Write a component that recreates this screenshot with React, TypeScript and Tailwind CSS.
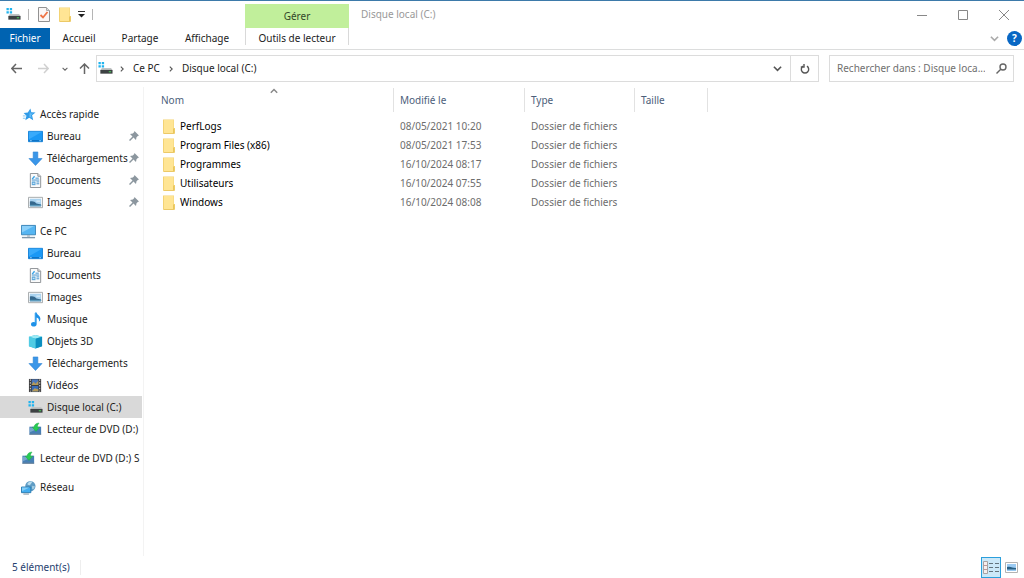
import type { ReactNode } from 'react';

type IconName =
  | 'star'
  | 'desktop'
  | 'download'
  | 'document'
  | 'picture'
  | 'pc'
  | 'music'
  | 'cube'
  | 'video'
  | 'drive'
  | 'dvd'
  | 'network';

interface NavEntry {
  label: string;
  icon: IconName;
  root?: boolean;
  pinned?: boolean;
  selected?: boolean;
}

const navGroups: NavEntry[][] = [
  [
    { label: 'Accès rapide', icon: 'star', root: true },
    { label: 'Bureau', icon: 'desktop', pinned: true },
    { label: 'Téléchargements', icon: 'download', pinned: true },
    { label: 'Documents', icon: 'document', pinned: true },
    { label: 'Images', icon: 'picture', pinned: true },
  ],
  [
    { label: 'Ce PC', icon: 'pc', root: true },
    { label: 'Bureau', icon: 'desktop' },
    { label: 'Documents', icon: 'document' },
    { label: 'Images', icon: 'picture' },
    { label: 'Musique', icon: 'music' },
    { label: 'Objets 3D', icon: 'cube' },
    { label: 'Téléchargements', icon: 'download' },
    { label: 'Vidéos', icon: 'video' },
    { label: 'Disque local (C:)', icon: 'drive', selected: true },
    { label: 'Lecteur de DVD (D:)', icon: 'dvd' },
  ],
  [{ label: 'Lecteur de DVD (D:) S', icon: 'dvd', root: true }],
  [{ label: 'Réseau', icon: 'network', root: true }],
];

const files = [
  { name: 'PerfLogs', modified: '08/05/2021 10:20' },
  { name: 'Program Files (x86)', modified: '08/05/2021 17:53' },
  { name: 'Programmes', modified: '16/10/2024 08:17' },
  { name: 'Utilisateurs', modified: '16/10/2024 07:55' },
  { name: 'Windows', modified: '16/10/2024 08:08' },
];

const drawings: Record<IconName, ReactNode> = {
  star: (
    <>
      <path d="M10 1.5l1 4 4.500.3-3.700 3 1.200 5.200-4.200-2.600L4.600 14l1.200-4.700-3-3 4.500-.5z" fill="#2f9be8" />
      <path d="M9.500 4l.8 2.800 3 .2-2.700 1.800.7 3-2.500-1.600z" fill="#62bdf7" />
      <path d="M2 9.500h3M2 12h3" stroke="#7cc4f2" />
    </>
  ),
  desktop: (
    <>
      <path d="M.5 2.500h15v11H.5z" fill="#1a98f5" stroke="#1380d6" />
      <path d="M1 3h14L1 11z" fill="#38aafb" />
      <path d="M1 12.500h14" stroke="#0b66b5" />
      <path d="M2 12.500h2M12 12.500h2" stroke="#9ad4ff" />
    </>
  ),
  download: <path d="M5.500 1h5v7h4.500L8 15.500 1 8h4.500z" fill="#3a96e8" stroke="#2c82d2" strokeWidth=".6" />,
  document: (
    <>
      <path d="M2.500.5h8l3 3v12h-11z" fill="#fbfbfb" stroke="#8b8f93" />
      <path d="M10.500.5v3h3" fill="#ddd" stroke="#8b8f93" />
      <path d="M8 5.500h3.500M4 7.500h8M9 9.500h3M9 11.500h3" stroke="#3b8dcb" />
      <path d="M4.500 6.500L7 3.500" stroke="#35a2e8" strokeWidth="1.500" />
      <path d="M4 9h4v4H4z" fill="#5fa9dc" />
      <path d="M5 11h2" stroke="#e3f2fb" />
    </>
  ),
  picture: (
    <>
      <path d="M.5 2.500h15v11H.5z" fill="#fafafa" stroke="#a3a7aa" />
      <path d="M2 4h12v8H2z" fill="#a9d3f0" />
      <path d="M2 7c3-1 5 0 7 2l5 1v2H2z" fill="#35688d" />
      <path d="M2 10.500h12V12H2z" fill="#5c9bbd" />
      <path d="M9 6h4v1H9z" fill="#eef7fc" />
    </>
  ),
  pc: (
    <>
      <path d="M.5 1.500h15v10H.5z" fill="#55b5f2" stroke="#3a84b7" />
      <path d="M1 2h13L1 9z" fill="#8bd0fa" />
      <path d="M6.500 12h3v1.500h-3z" fill="#a7b4bd" />
      <path d="M1 14.500h14" stroke="#7f97aa" strokeWidth="1.500" />
    </>
  ),
  music: (
    <>
      <path d="M7.500.5h1.700c.2 2.500 4.300 3.500 4 7-.1 1.500-.9 2.500-1.700 3 .8-2.500-.4-4-2.300-4.600V13c0 3.300-6 3.300-6 .2 0-2.300 2.500-3 4.300-2.200z" fill="#1e91e8" />
      <path d="M7.500 1v10.500" stroke="#58b5f5" strokeWidth=".8" />
    </>
  ),
  cube: (
    <>
      <path d="M1 3l7-2 7 2v10l-7 2.500L1 13z" fill="#2bb3d6" />
      <path d="M1 3l7-2 7 2-7 2z" fill="#9ceaf5" />
      <path d="M8 5l7-2v10l-7 2.500z" fill="#0c8fc0" />
      <path d="M1 3l7 2v10.500L1 13z" fill="#50cce4" />
    </>
  ),
  video: (
    <>
      <path d="M1 1h13v14H1z" fill="#3c3c3e" />
      <path d="M4 1.500h7v6H4z" fill="#4b78bd" />
      <path d="M4 8.500h7v6H4z" fill="#386bb8" />
      <path d="M4 7l2-3 2 2 3-3v4.500H4zM4 14l3-3 4 1v2.500H4z" fill="#b49a59" />
      <path d="M2.500 1.500v13M12.500 1.500v13" stroke="#e3e3e3" strokeDasharray="1.500 1.500" />
    </>
  ),
  drive: (
    <>
      <path d="M.5 1H3v2.500H.5zM4 1h2.500v2.500H4zM.5 4.500H3V7H.5zM4 4.500h2.500V7H4z" fill="#20b4ef" />
      <path d="M4 7.500h10L15.500 10h-13z" fill="#c1c4c5" />
      <path d="M2.500 9.500h13v4h-13z" fill="#3d4143" />
      <path d="M11.500 11.500H14" stroke="#4fe05f" />
    </>
  ),
  dvd: (
    <>
      <path d="M1.500 5h12.500v8.500H1.500z" fill="#477fb5" />
      <path d="M2 6h11L2 11z" fill="#77a6cc" />
      <path d="M1.500 13h12.500" stroke="#6d7f91" />
      <path d="M11.500 1C8 1.500 6.500 3.500 6.500 5.500H4.500L8.500 10l4-4.500H10c0-1.500.3-2.500 1.500-4z" fill="#28cc52" stroke="#1da944" strokeWidth=".5" />
    </>
  ),
  network: (
    <>
      <circle cx="10" cy="6.500" r="5.500" fill="#5f9cc4" />
      <path d="M7 3.500c2-2 4-2 5-1.500L9.500 5.500 7 5z" fill="#b9dced" />
      <path d="M12 6l3 1-2 3-1.500-1z" fill="#a3cde3" />
      <path d="M.5 7.500h10v6H.5z" fill="#42adf0" stroke="#287aaf" />
      <path d="M1 8h8l-8 4z" fill="#83cef8" />
      <path d="M2.500 15h6" stroke="#788e9e" />
    </>
  ),
};

function Icon({ name }: { name: IconName }) {
  return (
    <svg className="w-[15px] h-[15px] shrink-0" viewBox="0 0 16 16" aria-hidden="true">
      {drawings[name]}
    </svg>
  );
}

function FolderIcon() {
  return (
    <svg className="w-3 h-[15px] shrink-0" viewBox="0 0 12 15" aria-hidden="true">
      <path d="M0 .5h11V9h1v5.500H0z" fill="#f3d374" />
      <path d="M1 1h9.500v13H1z" fill="#ffe594" />
      <path d="M10 9.500h1.500V14H10z" fill="#e9c65c" />
      <path d="M.5 14.500h11" stroke="#ecc967" />
    </svg>
  );
}

function PinIcon() {
  return (
    <svg className="w-2.5 h-2.5 shrink-0" viewBox="0 0 10 10" aria-hidden="true">
      <path d="M5.500 0L10 4.500l-1.200.4L7.500 6.200 7 9 4.500 6.500 1 10 0 9l3.500-3.500L1 3l2.800-.5 1.300-1.300z" fill="#8c979f" />
    </svg>
  );
}

interface ChevronProps {
  direction: 'up' | 'down' | 'right';
  className: string;
}

function Chevron({ direction, className }: ChevronProps) {
  const paths = {
    up: 'M1 6l4-4 4 4',
    down: 'M1 3l4 4 4-4',
    right: 'M3 1l4 4-4 4',
  };
  return (
    <svg className={className} viewBox="0 0 10 10" fill="none" stroke="currentColor" aria-hidden="true">
      <path d={paths[direction]} strokeWidth="1.800" />
    </svg>
  );
}

function Separator() {
  return <span className="w-px h-[11px] bg-[#b5b5b5]" />;
}

function TitleBar() {
  return (
    <div className="flex h-[27px]">
      <div className="flex items-center w-[245px] shrink-0 pl-1.5">
        <Icon name="drive" />
        <div className="flex items-center gap-[9px] pl-[7px]">
          <Separator />
          <button aria-label="Propriétés">
            <svg className="w-3 h-[15px]" viewBox="0 0 12 15" aria-hidden="true">
              <path d="M.5.5h8l3 3v11H.5z" fill="#faf7f6" stroke="#929292" />
              <path d="M8.500.5v3h3" fill="#ddd" stroke="#aaa" />
              <path d="M2.500 8l2.500 2.500L9.500 5" fill="none" stroke="#ee7445" strokeWidth="1.800" />
            </svg>
          </button>
          <button aria-label="Nouveau dossier">
            <FolderIcon />
          </button>
        </div>
        <div className="flex items-center gap-[7px] pl-[7px]">
          <button aria-label="Personnaliser la barre d'outils Accès rapide">
            <svg className="w-[7px] h-[7px]" viewBox="0 0 7 7" aria-hidden="true">
              <path d="M0 .5h7" stroke="#333" />
              <path d="M0 3h7L3.500 6.500z" fill="#222" />
            </svg>
          </button>
          <Separator />
        </div>
      </div>
      <div className="flex items-center justify-center w-[104px] mt-[3px] shrink-0 bg-[#c1ef9b] text-[#33472a]">
        Gérer
      </div>
      <h1 className="flex-1 flex items-center pl-3 text-[#999]">Disque local (C:)</h1>
      <div className="flex text-[#888]">
        <button className="flex items-center justify-center w-[41px]" aria-label="Réduire">
          <svg className="w-[10px] h-[10px]" viewBox="0 0 10 10" stroke="currentColor">
            <path d="M0 5.500h10" />
          </svg>
        </button>
        <button className="flex items-center justify-center w-[41px]" aria-label="Agrandir">
          <svg className="w-[10px] h-[10px]" viewBox="0 0 10 10" fill="none" stroke="currentColor">
            <path d="M.5.5h9v9h-9z" />
          </svg>
        </button>
        <button className="flex items-center justify-center w-[41px]" aria-label="Fermer">
          <svg className="w-[10px] h-[10px]" viewBox="0 0 10 10" stroke="currentColor">
            <path d="M0 0l10 10M10 0L0 10" />
          </svg>
        </button>
      </div>
    </div>
  );
}

function RibbonTabs() {
  return (
    <div className="flex h-[22px] border-b border-[#dcdddd]">
      <button className="w-[50px] bg-[#0063b1] text-white">Fichier</button>
      <button className="w-[58px]">Accueil</button>
      <button className="w-16">Partage</button>
      <button className="w-[70px] mr-[3px]">Affichage</button>
      <button className="w-[104px] mb-1 pt-[3px] border-x border-[#d9d9d9]">Outils de lecteur</button>
      <div className="flex items-center gap-2 ml-auto pr-0.5">
        <button aria-label="Développer le ruban">
          <Chevron direction="down" className="w-[9px] h-[9px] text-[#aaa]" />
        </button>
        <button
          className="flex items-center justify-center w-[15px] h-[15px] rounded-full bg-[#0867c4] text-white font-bold"
          aria-label="Aide"
        >
          ?
        </button>
      </div>
    </div>
  );
}

function AddressRow() {
  return (
    <div className="flex items-center h-[37px] pr-2.5">
      <div className="flex items-center w-24 shrink-0 pl-[11px] text-[#666]">
        <button aria-label="Précédent">
          <svg className="w-[11px] h-[11px]" viewBox="0 0 11 11" fill="none" stroke="currentColor" strokeWidth="1.500">
            <path d="M11 5.500H1M5 1L.8 5.500 5 10" />
          </svg>
        </button>
        <button className="ml-4 text-[#d0d0d0]" aria-label="Suivant">
          <svg className="w-[11px] h-[11px]" viewBox="0 0 11 11" fill="none" stroke="currentColor" strokeWidth="1.500">
            <path d="M0 5.500h10M6 1l4.200 4.500L6 10" />
          </svg>
        </button>
        <button className="ml-[13px]" aria-label="Emplacements récents">
          <Chevron direction="down" className="w-1.5 h-1.5" />
        </button>
        <button className="ml-[11px]" aria-label="Dossier parent">
          <svg className="w-[11px] h-[11px]" viewBox="0 0 11 11" fill="none" stroke="currentColor" strokeWidth="1.500">
            <path d="M5.500 11V1M1 5.500L5.500 1 10 5.500" />
          </svg>
        </button>
      </div>
      <div className="flex flex-1 min-w-0 h-[27px] border border-[#dcdcdc]">
        <nav className="flex flex-1 items-center pl-px" aria-label="Chemin">
          <Icon name="drive" />
          <Chevron direction="right" className="ml-1.5 w-1.5 h-1.5 text-[#555]" />
          <a href="#ce-pc" className="ml-2">Ce PC</a>
          <Chevron direction="right" className="ml-2 w-1.5 h-1.5 text-[#555]" />
          <a href="#disque-local" className="ml-2">Disque local (C:)</a>
        </nav>
        <button className="flex items-center justify-center w-[26px] text-[#555]" aria-label="Emplacements précédents">
          <Chevron direction="down" className="w-[9px] h-[9px]" />
        </button>
        <button
          className="flex items-center justify-center w-7 border-l border-[#dcdcdc] text-[#555]"
          aria-label="Actualiser"
        >
          <svg className="w-2.5 h-2.5" viewBox="0 0 10 10" fill="none" stroke="currentColor" strokeWidth="1.400">
            <path d="M7 2.200A3.700 3.700 0 1 1 3 2.200M4 0v3H.8" />
          </svg>
        </button>
      </div>
      <label className="flex items-center w-[185px] h-[27px] ml-2.5 pl-[7px] pr-1.5 border border-[#dcdcdc] text-[#666]">
        <input
          type="search"
          className="flex-1 min-w-0 outline-none placeholder:text-[#6f6f6f]"
          placeholder="Rechercher dans : Disque loca..."
          aria-label="Rechercher dans : Disque local (C:)"
        />
        <svg className="w-[11px] h-[11px] shrink-0" viewBox="0 0 11 11" fill="none" stroke="currentColor" strokeWidth="1.400">
          <circle cx="7" cy="4" r="3" />
          <path d="M5 6L.5 10.500" />
        </svg>
      </label>
    </div>
  );
}

function NavItem({ entry }: { entry: NavEntry }) {
  return (
    <button
      className={`flex items-center w-full h-[22px] text-left ${entry.root ? 'pl-[21px]' : 'pl-7'} ${
        entry.selected ? 'bg-[#d9d9d9]' : 'hover:bg-[#e5f3ff]'
      }`}
    >
      <Icon name={entry.icon} />
      <span className="flex-1 pl-1 whitespace-nowrap">{entry.label}</span>
      {entry.pinned && (
        <span className="pr-[3px]">
          <PinIcon />
        </span>
      )}
    </button>
  );
}

function Sidebar() {
  return (
    <nav className="w-36 shrink-0 pt-4 pr-px border-r border-[#f3f3f3]" aria-label="Volet de navigation">
      {navGroups.map((group, i) => (
        <div key={i} className="mb-[7px]">
          {group.map((entry) => (
            <NavItem key={entry.label} entry={entry} />
          ))}
        </div>
      ))}
    </nav>
  );
}

function FileList() {
  return (
    <main className="flex-1 min-w-0 pt-px pl-[11px]">
      <table className="table-fixed w-[553px] text-left text-[#6d6d6d]">
        <colgroup>
          <col className="w-[239px]" />
          <col className="w-[131px]" />
          <col className="w-[110px]" />
          <col className="w-[73px]" />
        </colgroup>
        <thead className="text-[#4c607a]">
          <tr>
            {['Nom', 'Modifié le', 'Type', 'Taille'].map((title) => (
              <th key={title} className="relative p-0 pb-[5px] font-normal">
                <div className="flex items-center h-6 pl-1.5 border-r border-[#e2e2e2]">{title}</div>
                {title === 'Nom' && (
                  <Chevron direction="up" className="absolute top-0 left-[115px] w-2 h-2 text-[#888]" />
                )}
              </th>
            ))}
          </tr>
        </thead>
        <tbody>
          {files.map((file) => (
            <tr key={file.name} className="h-[19px] hover:bg-[#e5f3ff]">
              <td className="p-0 pl-2">
                <div className="flex items-center gap-[5px] text-black">
                  <FolderIcon />
                  {file.name}
                </div>
              </td>
              <td className="p-0 pl-1.5">{file.modified}</td>
              <td className="p-0 pl-1.5">Dossier de fichiers</td>
              <td className="p-0 pl-1.5" />
            </tr>
          ))}
        </tbody>
      </table>
    </main>
  );
}

function StatusBar() {
  return (
    <footer className="flex items-center h-[22px] pl-3 pr-1 text-[#26416f]">
      <span className="pr-2.5 border-r border-[#eee]">5 élément(s)</span>
      <div className="flex items-center gap-0.5 ml-auto">
        <button
          className="flex items-center justify-center w-5 h-[21px] border border-[#2b9fdc] bg-[#cce8f8]"
          aria-label="Détails"
        >
          <svg className="w-4 h-[13px]" viewBox="0 0 16 13" aria-hidden="true">
            <path d="M.5.5h4v12h-4z" fill="#f7eeee" stroke="#a9a3a3" />
            <path d="M1 4.500h3M1 8.500h3" stroke="#bd9999" />
            <path d="M6 2.500h4M12 2.500h4M6 6.500h4M12 6.500h4M6 10.500h4M12 10.500h4" stroke="#64747e" />
          </svg>
        </button>
        <button className="flex items-center justify-center w-[17px] h-[21px]" aria-label="Grandes icônes">
          <svg className="w-[13px] h-[11px]" viewBox="0 0 13 11" aria-hidden="true">
            <path d="M.5.5h12v10H.5z" fill="#fff" stroke="#b3b3b3" />
            <path d="M2 2h9v7H2z" fill="#9bcbf3" />
            <path d="M2 5c4-1 5 1 9 1v1.500H2z" fill="#286084" />
          </svg>
        </button>
      </div>
    </footer>
  );
}

export default function App() {
  return (
    <div className="flex flex-col min-h-screen bg-white border-t border-[#3d7aaa] font-['Noto_Sans','Open_Sans',sans-serif] text-[10px] leading-[15px] text-[#1c1c1c]">
      <TitleBar />
      <RibbonTabs />
      <AddressRow />
      <div className="flex flex-1">
        <Sidebar />
        <FileList />
      </div>
      <StatusBar />
    </div>
  );
}
